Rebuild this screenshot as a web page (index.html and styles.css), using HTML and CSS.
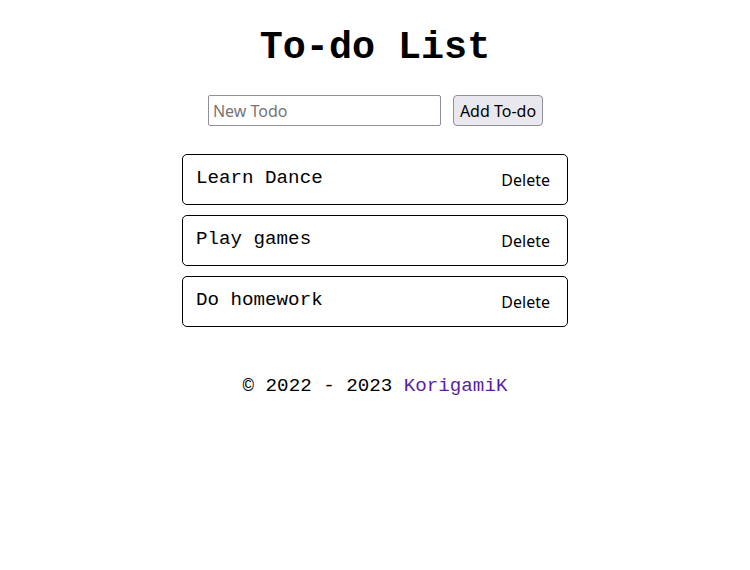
FILE: index.html
```html
<!DOCTYPE html>
<html lang="en">
<head>
<meta charset="utf-8">
<title>To-do List</title>
<link rel="stylesheet" href="styles.css">
</head>
<body>
<h1 class="title">To-do List</h1>
<form class="add-form">
  <input class="add-input" type="text" placeholder="New Todo">
  <button class="add-btn" type="button">Add To-do</button>
</form>
<ul class="todo-list">
  <li class="todo-item"><span class="todo-text">Learn Dance</span><button class="delete-btn" type="button">Delete</button></li>
  <li class="todo-item"><span class="todo-text">Play games</span><button class="delete-btn" type="button">Delete</button></li>
  <li class="todo-item"><span class="todo-text">Do homework</span><button class="delete-btn" type="button">Delete</button></li>
</ul>
<footer class="footer">© 2022 - 2023 <a class="footer-link" href="#">KorigamiK</a></footer>
</body>
</html>
```

FILE: styles.css
```css
body {
  margin: 0;
  font-family: "Liberation Mono", "Courier New", monospace;
  color: #000;
  background: #fff;
}

.title {
  text-align: center;
  font-size: 38.4px;
  font-weight: bold;
  margin: 25.7px 0;
}

.add-form {
  display: flex;
  justify-content: center;
  gap: 12px;
  margin: 0;
}

.add-input {
  box-sizing: border-box;
  width: 233px;
  height: 31px;
  margin-left: 1px;
  padding: 2px 4px;
  border: 1px solid #8f8f9d;
  border-radius: 2px;
  font-family: "Noto Sans", "Open Sans", sans-serif;
  font-size: 16px;
  color: #000;
  background: #fff;
}

.add-input::placeholder {
  color: #757575;
}

.add-btn {
  box-sizing: border-box;
  height: 31px;
  padding: 0 6px;
  border: 1px solid #8f8f9d;
  border-radius: 4px;
  background: #e9e9ed;
  font-family: "Noto Sans", "Open Sans", sans-serif;
  font-size: 16px;
  color: #000;
}

.todo-list {
  list-style: none;
  width: 386px;
  margin: 28px auto 0;
  padding: 0;
  display: flex;
  flex-direction: column;
  gap: 10px;
}

.todo-item {
  box-sizing: border-box;
  height: 51px;
  display: flex;
  justify-content: space-between;
  align-items: flex-start;
  padding: 12px 11px 0 13px;
  border: 1px solid #000;
  border-radius: 5px;
}

.todo-text {
  font-size: 19.2px;
}

.delete-btn {
  border: none;
  background: none;
  padding: 2px 6px;
  font-family: "Noto Sans", "Open Sans", sans-serif;
  font-size: 16px;
  color: #000;
}

.footer {
  margin-top: 48px;
  text-align: center;
  font-size: 19.2px;
}

.footer-link {
  color: #5b1f9e;
  text-decoration: none;
}
```
